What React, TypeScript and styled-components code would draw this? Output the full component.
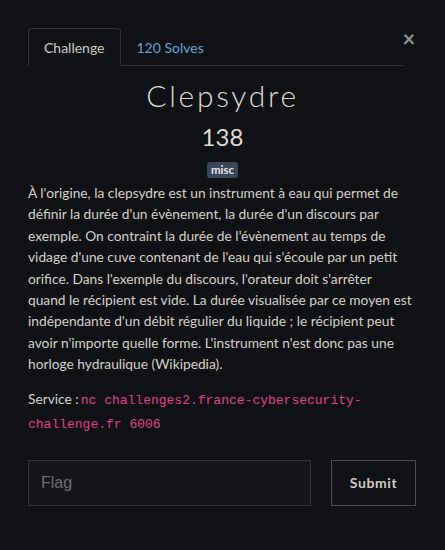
import React from "react";
import styled, { createGlobalStyle } from "styled-components";

const Global = createGlobalStyle`
  html, body { margin: 0; padding: 0; background: #0f1114; }
  body { font-family: Lato, "Noto Sans", sans-serif; color: #d6d2ca; }
  * { box-sizing: border-box; }
`;

const Modal = styled.div`
  position: relative;
  width: 445px;
  height: 550px;
  padding: 28px 28px 0 28px;
  background: #0f1114;
`;

const Close = styled.button`
  position: absolute;
  top: 29px;
  right: 28px;
  width: 16px;
  height: 20px;
  padding: 0;
  border: 0;
  background: transparent;
  color: #8f9296;
  font-family: Lato, sans-serif;
  font-size: 22px;
  font-weight: 700;
  line-height: 20px;
  cursor: pointer;
`;

const Tabs = styled.nav`
  display: flex;
  margin-right: 14px;
  border-bottom: 1px solid #30353b;
`;

const Tab = styled.a<{ $active?: boolean }>`
  display: block;
  height: 38px;
  padding: 0 15px;
  margin-bottom: -1px;
  line-height: 37px;
  font-size: 14px;
  text-decoration: none;
  border: 1px solid ${(p) => (p.$active ? "#30353b" : "transparent")};
  border-bottom-color: ${(p) => (p.$active ? "#0f1114" : "transparent")};
  border-radius: 4px 4px 0 0;
  color: ${(p) => (p.$active ? "#d0ccc4" : "#5fa5d9")};
`;

const Title = styled.h2`
  margin: 10px 0 0 0;
  text-align: center;
  font-family: Lato, sans-serif;
  font-weight: 300;
  font-size: 30px;
  letter-spacing: 2.7px;
  line-height: 38px;
  color: #dedad2;
`;

const Points = styled.h4`
  margin: 8px 0 0 0;
  text-align: center;
  font-weight: 400;
  font-size: 24px;
  line-height: 30px;
  color: #dedad2;
`;

const TagRow = styled.div`
  display: flex;
  justify-content: center;
  margin-top: 10px;
`;

const Tag = styled.span`
  display: inline-block;
  padding: 0 4px;
  height: 16px;
  line-height: 16px;
  border-radius: 3px;
  background: #38475a;
  color: #e8e6e2;
  font-size: 11.5px;
  font-weight: 700;
`;

const Description = styled.p`
  margin: 4px 0 0 0;
  font-size: 13.75px;
  line-height: 21.4px;
  color: #d6d2ca;
`;

const Service = styled.p`
  margin: 13px 0 0 0;
  font-size: 13.75px;
  line-height: 22px;
  color: #d6d2ca;
`;

const Code = styled.code`
  margin-left: 2px;
  font-family: "Liberation Mono", monospace;
  font-size: 13px;
  color: #e0438f;
`;

const Form = styled.form`
  display: flex;
  gap: 20px;
  margin-top: 24px;
  margin-right: 1px;
`;

const FlagInput = styled.input`
  flex: 1;
  height: 46px;
  padding: 0 12px;
  background: #131518;
  border: 1px solid #2f353b;
  color: #d6d2ca;
  font-family: "Liberation Sans", Arial, sans-serif;
  font-size: 16px;
  outline: none;
  &::placeholder { color: #6b6d70; }
`;

const Submit = styled.button`
  width: 85px;
  height: 46px;
  background: transparent;
  border: 1px solid #4a4d52;
  color: #cfcbc3;
  font-family: Lato, sans-serif;
  font-weight: 700;
  font-size: 14px;
  letter-spacing: 0.6px;
  cursor: pointer;
`;

export default function App() {
  return (
    <>
      <Global />
      <Modal>
        <Close aria-label="Close">×</Close>
        <Tabs>
          <Tab $active href="#">Challenge</Tab>
          <Tab href="#">120 Solves</Tab>
        </Tabs>
        <Title>Clepsydre</Title>
        <Points>138</Points>
        <TagRow>
          <Tag>misc</Tag>
        </TagRow>
        <Description>
          À l'origine, la clepsydre est un instrument à eau qui permet de
          définir la durée d'un évènement, la durée d'un discours par
          exemple. On contraint la durée de l’évènement au temps de vidage
          d'une cuve contenant de l'eau qui s'écoule par un petit orifice.
          Dans l'exemple du discours, l'orateur doit s'arrêter
          <br />
          quand le récipient est vide. La durée visualisée par ce moyen est
          indépendante d'un débit régulier du liquide ; le récipient peut
          avoir n'importe quelle forme. L'instrument n'est donc pas une
          horloge hydraulique (Wikipedia).
        </Description>
        <Service>
          Service :<Code>nc challenges2.france-cybersecurity-challenge.fr 6006</Code>
        </Service>
        <Form onSubmit={(e) => e.preventDefault()}>
          <FlagInput placeholder="Flag" />
          <Submit type="submit">Submit</Submit>
        </Form>
      </Modal>
    </>
  );
}
